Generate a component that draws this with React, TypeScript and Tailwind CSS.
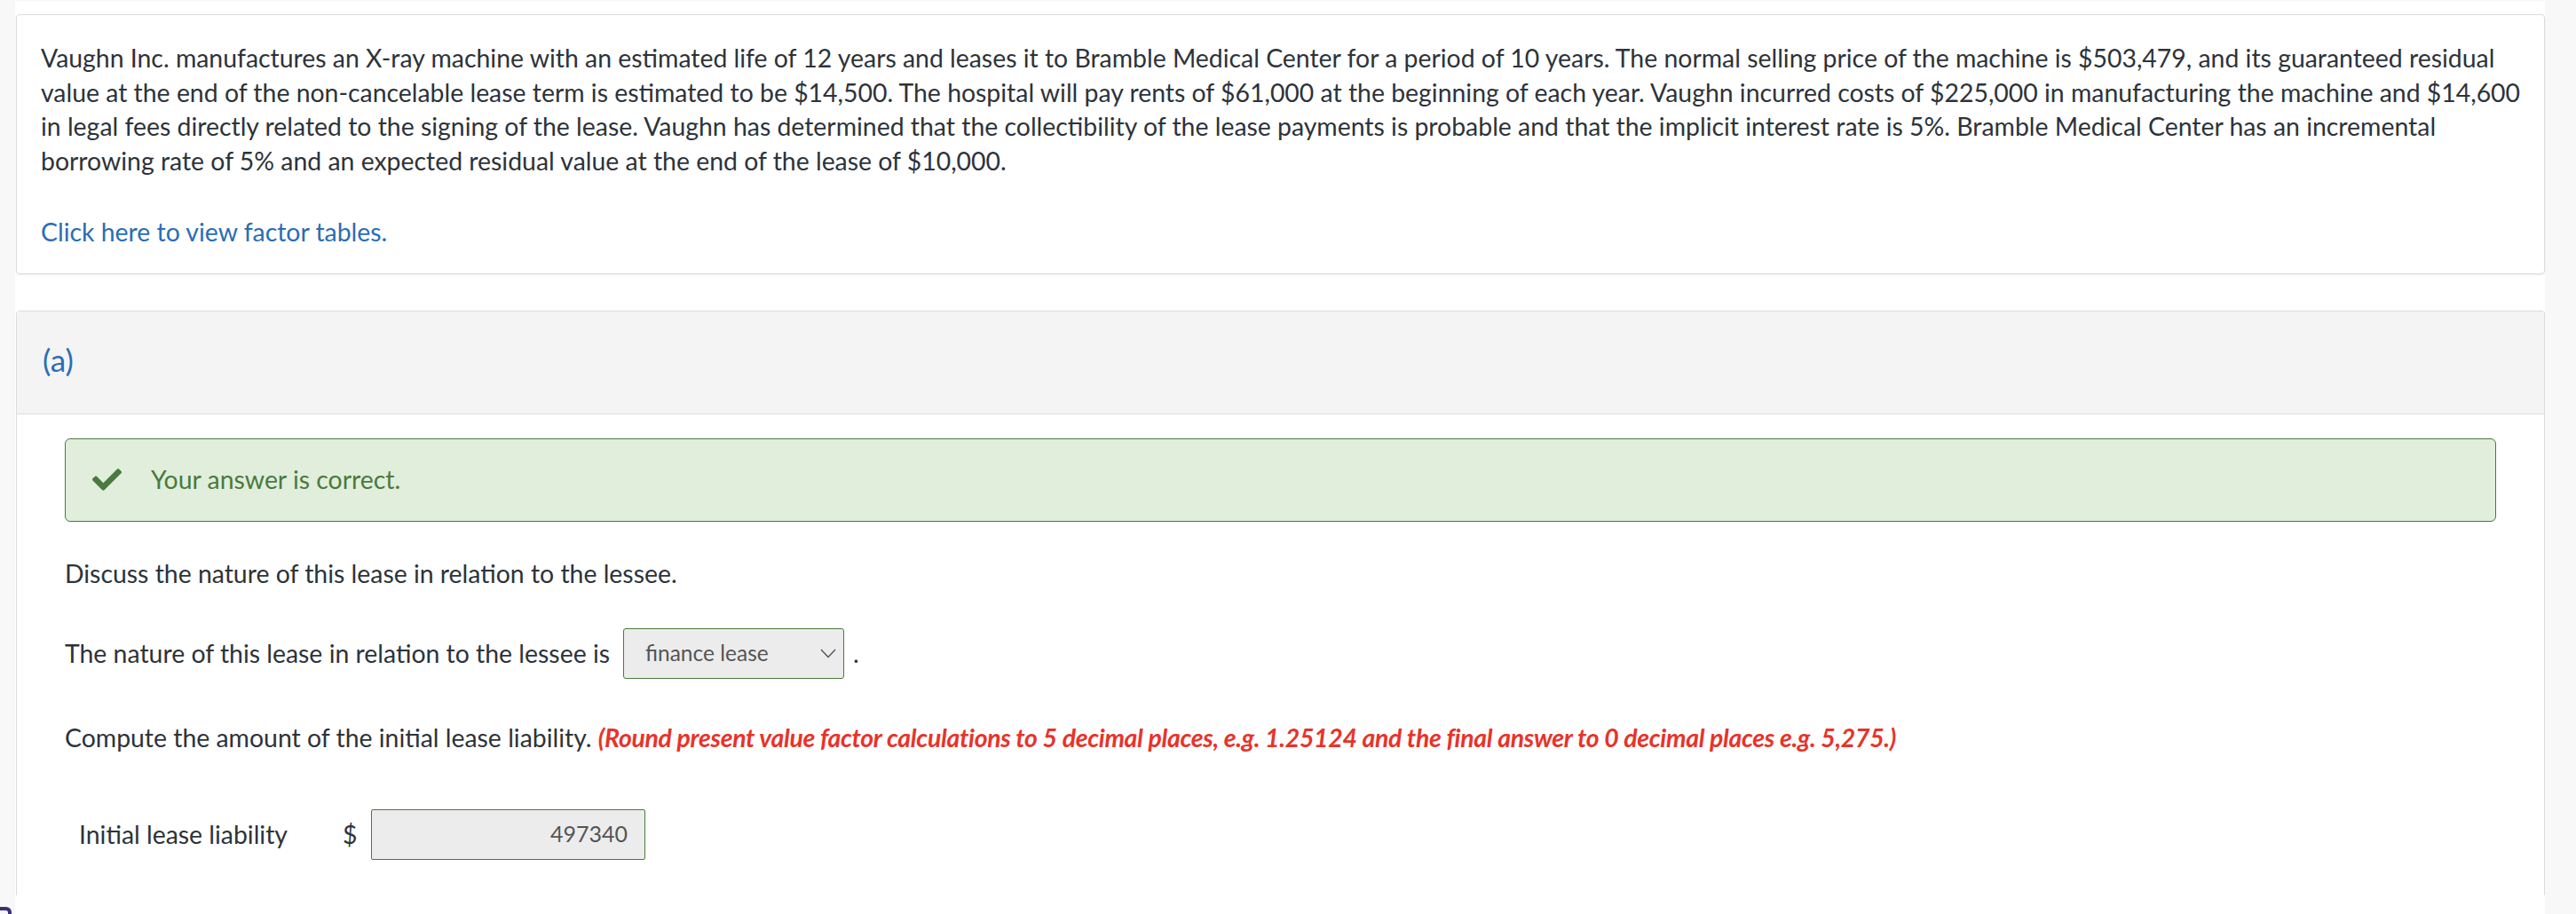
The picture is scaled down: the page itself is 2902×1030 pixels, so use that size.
import React from "react"

const textColor = "text-[#2d333a]"

const CheckIcon = () => (
    <svg width="33" height="25" viewBox="0 64 512 384" className="shrink-0">
        <path
            fill="#4a7a3e"
            d="M173.898 439.404l-166.4-166.4c-9.997-9.997-9.997-26.206 0-36.204l36.203-36.204c9.997-9.998 26.207-9.998 36.204 0L192 312.69 432.095 72.596c9.997-9.997 26.207-9.997 36.204 0l36.203 36.204c9.997 9.997 9.997 26.206 0 36.204l-294.4 294.401c-9.998 9.997-26.207 9.997-36.204-.001z"
        />
    </svg>
)

const Chevron = () => (
    <svg width="18" height="11" viewBox="0 0 18 11" className="shrink-0">
        <polyline points="1,1 9,9.5 17,1" fill="none" stroke="#555" strokeWidth="1.4" />
    </svg>
)

export default function App() {
    return (
        <div className="min-h-screen bg-[#f8f8f8] pt-px pl-[17px] pr-[35px] font-['Lato',sans-serif] relative">
            <div className="bg-white pl-px pt-[15px] pb-10 min-h-[1100px]">
                {/* problem statement */}
                <div className="rounded-[4px] border border-[#dcdcdc] shadow-[0_1px_2px_rgba(0,0,0,0.08)] pl-[27px] pr-[26px] pt-[29px] pb-[27px]">
                    <p className={`text-[28.4px] leading-[38.5px] ${textColor}`}>
                        Vaughn Inc. manufactures an X-ray machine with an estimated life of 12 years and leases it to Bramble Medical Center for a period of 10 years. The normal selling price of the machine is $503,479, and its guaranteed residual value at the end of the non-cancelable lease term is estimated to be $14,500. The hospital will pay rents of $61,000 at the beginning of each year. Vaughn incurred costs of $225,000 in manufacturing the machine and $14,600 in legal fees directly related to the signing of the lease. Vaughn has determined that the collectibility of the lease payments is probable and that the implicit interest rate is 5%. Bramble Medical Center has an incremental borrowing rate of 5% and an expected residual value at the end of the lease of $10,000.
                    </p>
                    <div className="mt-[42px] text-[28.4px] leading-[38.5px] text-[#2a6db5]">Click here to view factor tables.</div>
                </div>

                {/* part (a) */}
                <div className="mt-[41px] border border-[#dcdcdc] border-b-0 rounded-t-[4px]">
                    <div className="h-[116px] bg-[#f4f4f4] border-b border-[#dcdcdc] flex items-center pl-[29px] pb-[5px]">
                        <span className="text-[35px] text-[#2a6db5]">(a)</span>
                    </div>
                    <div className="pl-[54px] pr-[54px] pt-[27px] pb-10">
                        <div className="h-[94px] rounded-[6px] border border-[#4a7a3e] bg-[#e1eedb] flex items-center pl-[30px]">
                            <CheckIcon />
                            <span className="ml-[33px] text-[28.4px] text-[#4a7a3e]">Your answer is correct.</span>
                        </div>

                        <p className={`mt-[39px] text-[28.4px] leading-[38.5px] ${textColor}`}>
                            Discuss the nature of this lease in relation to the lessee.
                        </p>

                        <div className={`mt-[43px] flex items-center text-[28.4px] ${textColor}`}>
                            <span>The nature of this lease in relation to the lessee is</span>
                            <div className="ml-[15px] w-[249px] h-[57px] rounded-[3px] border border-[#4a7a3e] bg-[#ececec] flex items-center justify-between pl-[24px] pr-[8px]">
                                <span className="text-[24.5px] text-[#555]">finance lease</span>
                                <Chevron />
                            </div>
                            <span className="ml-[10px]">.</span>
                        </div>

                        <p className={`mt-[47px] text-[28.4px] leading-[38.5px] ${textColor}`}>
                            Compute the amount of the initial lease liability.{" "}
                            <span className="font-bold italic text-[#e8332a] tracking-[-0.3px]">
                                (Round present value factor calculations to 5 decimal places, e.g. 1.25124 and the final answer to 0 decimal places e.g. 5,275.)
                            </span>
                        </p>

                        <div className={`mt-[61px] flex items-center pl-[16px] text-[28.4px] ${textColor}`}>
                            <span className="w-[297px]">Initial lease liability</span>
                            <span className="w-[32px]">$</span>
                            <div className="w-[309px] h-[57px] rounded-[2px] border border-[#4a7a3e] bg-[#ececec] flex items-center justify-end pr-[19px]">
                                <span className="text-[25px] text-[#555]">497340</span>
                            </div>
                        </div>
                    </div>
                </div>
            </div>

            {/* floating widget peeking at bottom-left */}
            <div className="absolute left-0 top-[1022px] w-[13px] h-[20px] border-t-[4px] border-r-[4px] border-[#3b2f7d] rounded-tr-[6px]" />
        </div>
    )
}
